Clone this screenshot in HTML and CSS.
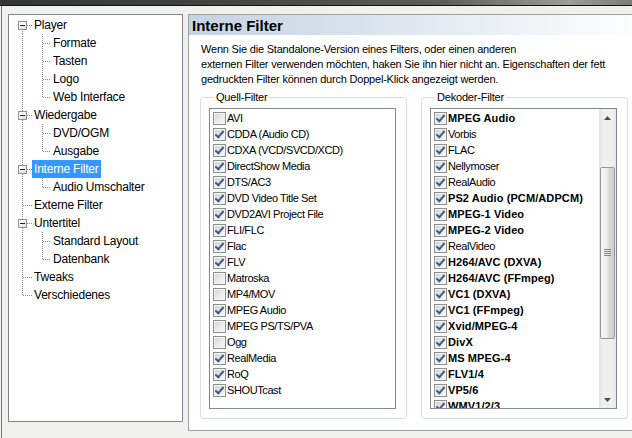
FILE: index.html
```html
<!DOCTYPE html>
<html lang="de">
<head>
  <meta charset="UTF-8">
  <title>Optionen - Interne Filter</title>
  <link rel="stylesheet" href="styles.css">
</head>
<body>
  <div class="titlebar"></div>
  <div class="window">
    <!-- Options tree -->
    <ul class="tree">
      <li class="row"><span class="gut g-first"><span class="exp"></span></span><span class="label">Player</span></li>
      <li class="row"><span class="gut g-pass"></span><span class="gut gut-b gb-tee"></span><span class="label">Formate</span></li>
      <li class="row"><span class="gut g-pass"></span><span class="gut gut-b gb-tee"></span><span class="label">Tasten</span></li>
      <li class="row"><span class="gut g-pass"></span><span class="gut gut-b gb-tee"></span><span class="label">Logo</span></li>
      <li class="row"><span class="gut g-pass"></span><span class="gut gut-b gb-last"></span><span class="label">Web Interface</span></li>
      <li class="row"><span class="gut g-tee"><span class="exp"></span></span><span class="label">Wiedergabe</span></li>
      <li class="row"><span class="gut g-pass"></span><span class="gut gut-b gb-tee"></span><span class="label">DVD/OGM</span></li>
      <li class="row"><span class="gut g-pass"></span><span class="gut gut-b gb-last"></span><span class="label">Ausgabe</span></li>
      <li class="row"><span class="gut g-tee"><span class="exp"></span></span><span class="label selected">Interne Filter</span></li>
      <li class="row"><span class="gut g-pass"></span><span class="gut gut-b gb-last"></span><span class="label">Audio Umschalter</span></li>
      <li class="row"><span class="gut g-tee"></span><span class="label">Externe Filter</span></li>
      <li class="row"><span class="gut g-tee"><span class="exp"></span></span><span class="label">Untertitel</span></li>
      <li class="row"><span class="gut g-pass"></span><span class="gut gut-b gb-tee"></span><span class="label">Standard Layout</span></li>
      <li class="row"><span class="gut g-pass"></span><span class="gut gut-b gb-last"></span><span class="label">Datenbank</span></li>
      <li class="row"><span class="gut g-tee"></span><span class="label">Tweaks</span></li>
      <li class="row"><span class="gut g-last"></span><span class="label">Verschiedenes</span></li>
    </ul>

    <!-- Page -->
    <div class="page">
      <h1 class="page-title">Interne Filter</h1>
      <p class="intro">
        Wenn Sie die Standalone-Version eines Filters, oder einen anderen<br>
        externen Filter verwenden möchten, haken Sie ihn hier nicht an. Eigenschaften der fett<br>
        gedruckten Filter können durch Doppel-Klick angezeigt werden.
      </p>

      <div class="groups">
        <div class="group">
          <span class="legend">Quell-Filter</span>
          <div class="listbox">
            <ul class="items">
              <li><span class="cb"></span>AVI</li>
              <li><span class="cb on"></span>CDDA (Audio CD)</li>
              <li><span class="cb on"></span>CDXA (VCD/SVCD/XCD)</li>
              <li><span class="cb on"></span>DirectShow Media</li>
              <li><span class="cb on"></span>DTS/AC3</li>
              <li><span class="cb on"></span>DVD Video Title Set</li>
              <li><span class="cb on"></span>DVD2AVI Project File</li>
              <li><span class="cb on"></span>FLI/FLC</li>
              <li><span class="cb on"></span>Flac</li>
              <li><span class="cb on"></span>FLV</li>
              <li><span class="cb"></span>Matroska</li>
              <li><span class="cb"></span>MP4/MOV</li>
              <li><span class="cb on"></span>MPEG Audio</li>
              <li><span class="cb"></span>MPEG PS/TS/PVA</li>
              <li><span class="cb"></span>Ogg</li>
              <li><span class="cb on"></span>RealMedia</li>
              <li><span class="cb on"></span>RoQ</li>
              <li><span class="cb on"></span>SHOUTcast</li>
            </ul>
          </div>
        </div>

        <div class="group">
          <span class="legend">Dekoder-Filter</span>
          <div class="listbox">
            <ul class="items">
              <li class="b"><span class="cb on"></span>MPEG Audio</li>
              <li><span class="cb on"></span>Vorbis</li>
              <li><span class="cb on"></span>FLAC</li>
              <li><span class="cb on"></span>Nellymoser</li>
              <li><span class="cb on"></span>RealAudio</li>
              <li class="b"><span class="cb on"></span>PS2 Audio (PCM/ADPCM)</li>
              <li class="b"><span class="cb on"></span>MPEG-1 Video</li>
              <li class="b"><span class="cb on"></span>MPEG-2 Video</li>
              <li><span class="cb on"></span>RealVideo</li>
              <li class="b"><span class="cb on"></span>H264/AVC (DXVA)</li>
              <li class="b"><span class="cb on"></span>H264/AVC (FFmpeg)</li>
              <li class="b"><span class="cb on"></span>VC1 (DXVA)</li>
              <li class="b"><span class="cb on"></span>VC1 (FFmpeg)</li>
              <li class="b"><span class="cb on"></span>Xvid/MPEG-4</li>
              <li class="b"><span class="cb on"></span>DivX</li>
              <li class="b"><span class="cb on"></span>MS MPEG-4</li>
              <li class="b"><span class="cb on"></span>FLV1/4</li>
              <li class="b"><span class="cb on"></span>VP5/6</li>
              <li class="b"><span class="cb on"></span>WMV1/2/3</li>
            </ul>
            <div class="scrollbar">
              <div class="sb-btn">
                <svg width="7" height="4" viewBox="0 0 7 4"><polygon points="0,4 3.5,0 7,4" fill="#4d4d4d"/></svg>
              </div>
              <div class="sb-gap"></div>
              <div class="sb-thumb">
                <svg width="7" height="8" viewBox="0 0 7 8">
                  <rect x="0" y="0" width="7" height="1" fill="#8a8a8a"/>
                  <rect x="0" y="2" width="7" height="1" fill="#8a8a8a"/>
                  <rect x="0" y="4" width="7" height="1" fill="#8a8a8a"/>
                  <rect x="0" y="6" width="7" height="1" fill="#8a8a8a"/>
                </svg>
              </div>
              <div class="sb-rest"></div>
              <div class="sb-btn">
                <svg width="7" height="4" viewBox="0 0 7 4"><polygon points="0,0 3.5,4 7,0" fill="#4d4d4d"/></svg>
              </div>
            </div>
          </div>
        </div>
      </div>
    </div>
  </div>
</body>
</html>
```

FILE: styles.css
```css
/* Reset */
* {
  margin: 0;
  padding: 0;
  box-sizing: border-box;
}

:root {
  --dot-v: repeating-linear-gradient(to bottom, #8a8a8a 0 1px, transparent 1px 2px);
  --dot-h: repeating-linear-gradient(to right, #8a8a8a 0 1px, transparent 1px 2px);
}

body {
  width: 632px;
  height: 438px;
  overflow: hidden;
  background-color: #f0f0ee;
  font-family: "Liberation Sans", Arial, sans-serif;
  color: #000;
}

/* Dark strip of the parent window */
.titlebar {
  height: 6px;
  background: linear-gradient(to right, #353535, #444 35%, #5c5c5c 70%, #9c9c9c 90%, #7c7c7c);
  border-bottom: 1px solid #141414;
}

.window {
  display: flex;
  align-items: flex-start;
  gap: 5px;
  height: 432px;
  margin-left: 1px;
  padding: 8px 0 0 6px;
  border-left: 1px solid #7a7a7a;
}

/* Tree */
.tree {
  flex: none;
  width: 175px;
  height: 408px;
  padding-top: 1px;
  list-style: none;
  background-color: #fff;
  border: 1px solid #828790;
}

.row {
  display: flex;
  align-items: center;
  height: 18px;
}

.gut {
  flex: none;
  display: flex;
  align-items: center;
  width: 23px;
  height: 18px;
}

.gut-b { width: 19px; }

.g-first { background: var(--dot-h) 14px 9px / 9px 1px no-repeat, var(--dot-v) 13px 9px / 1px 9px no-repeat; }
.g-tee   { background: var(--dot-h) 14px 9px / 9px 1px no-repeat, var(--dot-v) 13px 0 / 1px 18px no-repeat; }
.g-last  { background: var(--dot-h) 14px 9px / 9px 1px no-repeat, var(--dot-v) 13px 0 / 1px 10px no-repeat; }
.g-pass  { background: var(--dot-v) 13px 0 / 1px 18px no-repeat; }

.gb-tee  { background: var(--dot-h) 11px 9px / 8px 1px no-repeat, var(--dot-v) 10px 0 / 1px 18px no-repeat; }
.gb-last { background: var(--dot-h) 11px 9px / 8px 1px no-repeat, var(--dot-v) 10px 0 / 1px 10px no-repeat; }

.exp {
  width: 9px;
  height: 9px;
  margin: 1px 0 0 9px;
  border: 1px solid #919191;
  background:
    linear-gradient(#222, #222) center / 5px 1px no-repeat,
    linear-gradient(135deg, #fff 30%, #d8d8d8);
}

.label {
  height: 18px;
  padding: 0 2px;
  font-size: 12px;
  line-height: 18px;
  letter-spacing: -0.2px;
  white-space: nowrap;
}

.label.selected {
  background-color: #3399ff;
  color: #fff;
}

/* Page on the right */
.page {
  flex: none;
  width: 460px;
  height: 417px;
  background-color: #fff;
  border: 1px solid #a0a0a0;
  border-right: none;
}

.page-title {
  height: 20px;
  padding-left: 3px;
  font-size: 15px;
  font-weight: bold;
  line-height: 21px;
  background: linear-gradient(to right, #c5d3e3, #d8e1eb 35%, #eef2f6 70%, #fff);
}

.intro {
  padding: 7px 12px 0;
  font-size: 11px;
  line-height: 15px;
  letter-spacing: -0.2px;
  white-space: nowrap;
}

.groups {
  display: flex;
  gap: 14px;
  margin-top: 10px;
  padding-left: 11px;
}

.group {
  width: 207px;
  height: 322px;
  padding: 0 10px 9px 8px;
  border: 1px solid #d5dfe5;
  border-radius: 3px;
}

.legend {
  display: block;
  width: fit-content;
  margin: -7px 0 0 5px;
  padding: 0 2px;
  font-size: 11px;
  line-height: 13px;
  letter-spacing: -0.2px;
  background-color: #fff;
}

/* Checked list box */
.listbox {
  display: flex;
  height: 301px;
  margin-top: 4px;
  overflow: hidden;
  background-color: #fff;
  border: 1px solid #828790;
}

.items {
  flex: 1;
  padding: 1px 0 0 3px;
  list-style: none;
  overflow: hidden;
}

.items li {
  display: flex;
  align-items: center;
  gap: 1px;
  height: 16px;
  font-size: 11px;
  letter-spacing: -0.4px;
  white-space: nowrap;
}

.items li.b {
  font-weight: bold;
  letter-spacing: 0.1px;
}

.cb {
  flex: none;
  display: flex;
  align-items: center;
  justify-content: center;
  width: 13px;
  height: 13px;
  border: 1px solid #8e8f8f;
  background: linear-gradient(135deg, #cdcdcd, #eeeeee 60%, #f8f8f8);
  box-shadow: inset 0 0 0 1px #f4f4f4;
}

.cb.on::after {
  content: "";
  width: 3px;
  height: 7px;
  margin-top: -2px;
  border: solid #3e5897;
  border-width: 0 2px 2px 0;
  transform: rotate(40deg);
}

/* Scrollbar */
.scrollbar {
  flex: none;
  display: flex;
  flex-direction: column;
  width: 17px;
  background: linear-gradient(to right, #e4e4e4, #f0f0f0 25%, #f0f0f0 75%, #e8e8e8);
}

.sb-btn {
  display: flex;
  align-items: center;
  justify-content: center;
  height: 17px;
}

.sb-gap { height: 41px; }

.sb-thumb {
  display: flex;
  align-items: center;
  justify-content: center;
  height: 172px;
  margin: 0 1px;
  border: 1px solid #979797;
  border-radius: 2px;
  background: linear-gradient(to right, #f6f6f6, #ececec 45%, #d9d9d9 60%, #cfcfcf);
}

.sb-rest { flex: 1; }
```
